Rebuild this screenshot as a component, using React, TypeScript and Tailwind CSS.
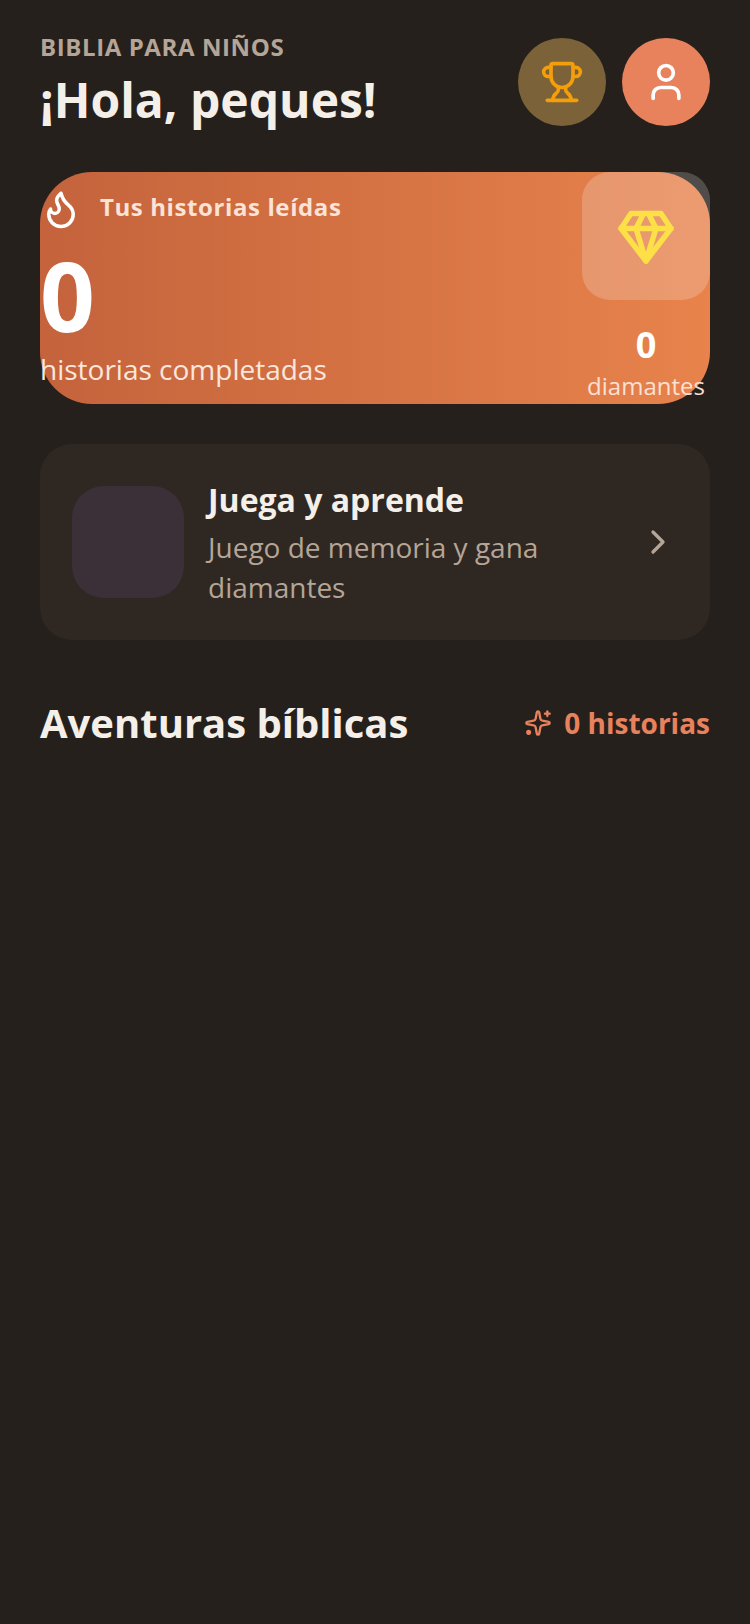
import { Trophy, User, Flame, ChevronRight } from 'lucide-react'

function DiamondIcon() {
  return (
    <svg width="60" height="60" viewBox="0 0 24 24" fill="none" stroke="currentColor" strokeWidth="2.2" strokeLinecap="round" strokeLinejoin="round" className="text-[#fde047]">
      <path d="M6 3h12l4 6-10 13L2 9Z" />
      <path d="M11 3 8 9l4 13 4-13-3-6" />
      <path d="M2 9h20" />
    </svg>
  )
}

function SparkIcon() {
  return (
    <svg width="28" height="28" viewBox="0 0 24 24" fill="none" stroke="currentColor" strokeWidth="2" strokeLinecap="round" strokeLinejoin="round">
      <path d="M11.017 2.814a1 1 0 0 1 1.966 0l1.051 5.558a2 2 0 0 0 1.594 1.594l5.558 1.051a1 1 0 0 1 0 1.966l-5.558 1.051a2 2 0 0 0-1.594 1.594l-1.051 5.558a1 1 0 0 1-1.966 0l-1.051-5.558a2 2 0 0 0-1.594-1.594l-5.558-1.051a1 1 0 0 1 0-1.966l5.558-1.051a2 2 0 0 0 1.594-1.594z" />
      <path d="M20 2v4" />
      <path d="M22 4h-4" />
      <circle cx="4" cy="20" r="1.2" fill="currentColor" />
    </svg>
  )
}

export default function App() {
  return (
    <div className="min-h-[1624px] bg-[#25201c] px-10 pt-[38px] font-['Open_Sans',sans-serif]">
      <header className="flex items-start justify-between">
        <div>
          <p className="-mt-px text-[24px] leading-[20px] font-bold tracking-[0.6px] text-[#b5a596]">BIBLIA PARA NIÑOS</p>
          <h1 className="mt-[13px] text-[48px] leading-[60px] font-bold text-[#f5efe9]">¡Hola, peques!</h1>
        </div>
        <div className="flex gap-4">
          <button className="flex h-[88px] w-[88px] items-center justify-center rounded-full bg-[#7b6239]">
            <Trophy size={44} strokeWidth={2} className="text-[#f59e0b]" />
          </button>
          <button className="flex h-[88px] w-[88px] items-center justify-center rounded-full bg-[#e8825c]">
            <User size={44} strokeWidth={2} className="text-white" />
          </button>
        </div>
      </header>

      <section className="mt-[42px] flex h-[232px] justify-between rounded-[52px] bg-gradient-to-r from-[#c4633c] to-[#e8834c]">
        <div className="text-white">
          <div className="flex items-center gap-[18px] pt-4">
            <Flame size={42} strokeWidth={2} />
            <span className="mb-1 text-[24px] leading-[38px] font-bold tracking-[0.6px] text-[#fbe3d8]">Tus historias leídas</span>
          </div>
          <p className="mt-[17px] text-[96px] leading-[96px] font-bold">0</p>
          <p className="mt-2 text-[28px] leading-[36px] text-[#fbe6dc]">historias completadas</p>
        </div>
        <div className="flex w-[128px] flex-col items-center">
          <div className="flex h-[128px] w-[128px] items-center justify-center rounded-[28px] bg-white/20">
            <DiamondIcon />
          </div>
          <p className="mt-[23px] text-[36px] leading-[44px] font-bold text-white">0</p>
          <p className="mt-[2px] text-[24px] leading-[34px] whitespace-nowrap text-[#fbe0d3]">diamantes</p>
        </div>
      </section>

      <section className="mt-10 flex h-[196px] items-center rounded-[32px] bg-[#2f2822] pr-8 pl-8">
        <div className="h-[112px] w-[112px] shrink-0 rounded-[32px] bg-[#3b3038]" />
        <div className="ml-6 flex-1 pt-[2px]">
          <h2 className="text-[32px] leading-[40px] font-bold text-[#f5efe9]">Juega y aprende</h2>
          <p className="mt-[7px] text-[28px] leading-[40px] text-[#b5a596]">Juego de memoria y gana diamantes</p>
        </div>
        <ChevronRight size={40} strokeWidth={2} className="shrink-0 text-[#b5a596]" />
      </section>

      <section className="mt-[53px] flex items-center justify-between">
        <h2 className="text-[40px] leading-[60px] font-bold text-[#f5efe9]">Aventuras bíblicas</h2>
        <div className="flex items-center gap-3 text-[#e8825c]">
          <SparkIcon />
          <span className="text-[28px] leading-[36px] font-bold">0 historias</span>
        </div>
      </section>
    </div>
  )
}
